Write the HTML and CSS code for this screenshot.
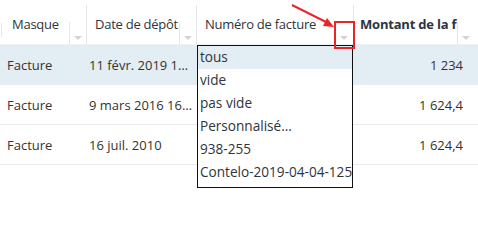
FILE: index.html
```html
<!DOCTYPE html>
<html lang="fr">
<head>
  <meta charset="UTF-8">
  <title>Documents</title>
  <link rel="stylesheet" href="styles.css">
</head>
<body>
  <div class="grid">
    <!-- header -->
    <div class="head">
      <div class="hcell first">
        <span class="label">Masque</span>
        <span class="filter"><i class="caret"></i></span>
      </div>
      <div class="hcell">
        <span class="label">Date de dépôt</span>
        <span class="filter"><i class="caret"></i></span>
      </div>
      <div class="hcell">
        <span class="label">Numéro de facture</span>
        <span class="filter open"><i class="caret"></i></span>
      </div>
      <div class="hcell last">
        <span class="label bold">Montant de la facture</span>
        <span class="filter"><i class="caret"></i></span>
      </div>
    </div>

    <!-- rows -->
    <div class="row selected">
      <div class="cell c1">Facture</div>
      <div class="cell c2">11 févr. 2019 10:24</div>
      <div class="cell c3"></div>
      <div class="cell num">1 234</div>
    </div>
    <div class="row">
      <div class="cell c1">Facture</div>
      <div class="cell c2">9 mars 2016 16:02</div>
      <div class="cell c3"></div>
      <div class="cell num">1 624,4</div>
    </div>
    <div class="row">
      <div class="cell c1">Facture</div>
      <div class="cell c2">16 juil. 2010</div>
      <div class="cell c3"></div>
      <div class="cell num">1 624,4</div>
    </div>

    <!-- filter dropdown for "Numéro de facture" -->
    <ul class="menu">
      <li class="active">tous</li>
      <li>vide</li>
      <li>pas vide</li>
      <li>Personnalisé...</li>
      <li>938-255</li>
      <li>Contelo-2019-04-04-1255</li>
    </ul>

    <!-- red annotation -->
    <div class="mark"></div>
    <svg class="arrow" width="60" height="30" viewBox="0 0 60 30">
      <line x1="2" y1="2" x2="38" y2="20" stroke="#e8262a" stroke-width="2"/>
      <polygon points="44,24 33,23 37,15" fill="#e8262a"/>
    </svg>
  </div>
</body>
</html>
```

FILE: styles.css
```css
body {
  margin: 0;
  font-family: "Open Sans", "Noto Sans", sans-serif;
  font-size: 13px;
  color: #333;
  background: #fff;
}
.grid {
  position: relative;
  width: 478px;
  height: 242px;
}
.head,
.row {
  display: grid;
  grid-template-columns: 87px 110px 157px 120px 4px;
}
.head {
  height: 44px;
  border-bottom: 1px solid #edf1f4;
}
.hcell {
  display: flex;
  align-items: stretch;
  border-right: 1px solid #e3e6ea;
  margin-top: 5px;
  color: #2c3540;
}
.hcell.first {
  padding-left: 4px;
  position: relative;
}
.hcell.first::before {
  content: "";
  position: absolute;
  left: 1px;
  top: 18px;
  height: 14px;
  border-left: 1px solid #e3e6ea;
}
.hcell.last {
  border-right: none;
}
.label {
  flex: 1;
  padding: 10px 0 0 8px;
  white-space: nowrap;
  overflow: hidden;
  min-width: 0;
  letter-spacing: -0.25px;
}
.label.bold {
  font-weight: bold;
  padding-left: 6px;
  letter-spacing: -0.2px;
}
.filter {
  width: 16px;
  flex: none;
  border-left: 1px solid #e3e6ea;
  margin-top: 17px;
  display: flex;
  justify-content: center;
  align-items: flex-end;
  padding-bottom: 4px;
}
.filter.open {
  border-left-color: transparent;
  width: 19px;
}
.caret {
  width: 0;
  height: 0;
  border-left: 4px solid transparent;
  border-right: 4px solid transparent;
  border-top: 4px solid #d0d4d8;
}
.row {
  height: 39px;
  border-bottom: 1px solid #e9ecef;
  align-items: center;
}
.row.selected {
  background: #e3edf4;
}
.cell {
  white-space: nowrap;
  overflow: hidden;
  text-overflow: ellipsis;
  padding: 0 4px 0 2px;
}
.cell.c1 {
  padding-left: 7px;
}
.cell.num {
  text-align: right;
  padding-right: 11px;
}
.menu {
  position: absolute;
  left: 197px;
  top: 45px;
  width: 154px;
  margin: 0;
  padding: 0 0 3px;
  list-style: none;
  background: #fff;
  border: 1px solid #111;
  overflow: hidden;
  font-size: 13.6px;
}
.menu li {
  height: 23px;
  line-height: 22px;
  padding-left: 2px;
  white-space: nowrap;
  color: #2c3540;
}
.menu li.active {
  background: #e3edf4;
}
.mark {
  position: absolute;
  left: 334px;
  top: 21px;
  width: 17px;
  height: 24px;
  border: 2px solid #e8262a;
}
.arrow {
  position: absolute;
  left: 290px;
  top: 3px;
}
```
